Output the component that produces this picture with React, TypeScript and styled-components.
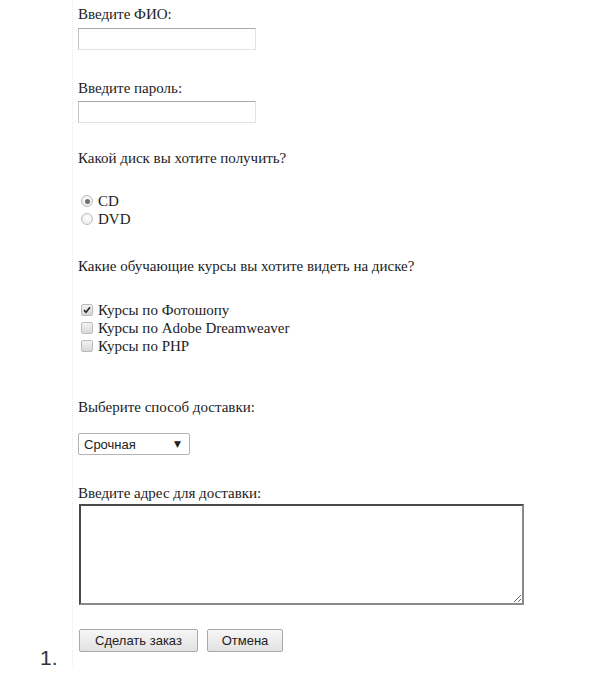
import React from "react";
import styled, { createGlobalStyle } from "styled-components";

const GlobalStyle = createGlobalStyle`
  html, body {
    margin: 0;
    padding: 0;
    background: #ffffff;
  }
`;

const Page = styled.div`
  display: flex;
  align-items: flex-end;
  padding-left: 40px;
`;

const Marker = styled.div`
  width: 32px;
  font-family: "Liberation Sans", Arial, sans-serif;
  font-size: 21px;
  line-height: 24px;
  color: #333333;
  margin-bottom: -2px;
`;

const Form = styled.form`
  display: flex;
  flex-direction: column;
  align-items: flex-start;
  border-left: 1px dotted #ececec;
  padding: 5px 0 16px 5px;
  font-family: "Liberation Serif", "Times New Roman", "DejaVu Serif", serif;
  font-size: 15px;
  line-height: 18px;
  color: #1c1c1c;
`;

const Section = styled.div<{ $top?: number }>`
  display: flex;
  flex-direction: column;
  align-items: flex-start;
  margin-top: ${(p) => p.$top ?? 0}px;
`;

const Label = styled.div<{ $gap?: number }>`
  margin-bottom: ${(p) => p.$gap ?? 0}px;
`;

const TextInput = styled.input`
  box-sizing: border-box;
  width: 178px;
  height: 22px;
  margin: 0;
  border: 1px solid #e2e2e2;
  border-top-color: #a8a8a8;
  border-left-color: #c4c4c4;
  background: #ffffff;
  outline: none;
`;

const Option = styled.label`
  display: flex;
  align-items: center;
  height: 18px;
  gap: 5px;
  padding-left: 3px;
`;

const Radio = styled.input.attrs({ type: "radio" })`
  appearance: none;
  box-sizing: border-box;
  width: 12px;
  height: 12px;
  margin: 0;
  border-radius: 50%;
  border: 1px solid #bdbdbd;
  background: radial-gradient(circle at 50% 40%, #ffffff 0%, #e6e6e6 100%);
  display: grid;
  place-items: center;

  &:checked::after {
    content: "";
    width: 5px;
    height: 5px;
    border-radius: 50%;
    background: #707070;
  }
`;

const Check = styled.input.attrs({ type: "checkbox" })`
  appearance: none;
  box-sizing: border-box;
  width: 12px;
  height: 12px;
  margin: 0;
  border-radius: 2px;
  border: 1px solid #bcbcbc;
  background: linear-gradient(#f2f2f2, #d8d8d8);
`;

const CheckWrap = styled.span`
  position: relative;
  display: inline-flex;
`;

const CheckMark = styled.svg`
  position: absolute;
  left: 1px;
  top: 1px;
  width: 10px;
  height: 10px;
  pointer-events: none;
`;

const SelectWrap = styled.div`
  position: relative;
  display: inline-flex;
`;

const Select = styled.select`
  appearance: none;
  box-sizing: border-box;
  width: 112px;
  height: 22px;
  margin: 0;
  padding: 0 0 0 5px;
  border: 1px solid #b4b4b4;
  border-radius: 2px;
  background: #ffffff;
  font-family: "Liberation Sans", Arial, sans-serif;
  font-size: 13px;
  color: #222222;
  outline: none;
`;

const Arrow = styled.span`
  position: absolute;
  right: 9px;
  top: 4px;
  font-size: 9px;
  line-height: 14px;
  color: #222222;
  pointer-events: none;
  font-family: "DejaVu Sans", sans-serif;
`;

const TextArea = styled.textarea`
  box-sizing: border-box;
  width: 445px;
  height: 101px;
  margin: 0 0 0 1px;
  border: 2px solid #4a4a4a;
  border-right-color: #8a8a8a;
  border-bottom-color: #8a8a8a;
  background: #ffffff;
  outline: none;
  resize: both;
`;

const Buttons = styled.div`
  display: flex;
  gap: 9px;
  padding-left: 1px;
`;

const Button = styled.button<{ $w: number }>`
  box-sizing: border-box;
  width: ${(p) => p.$w}px;
  height: 23px;
  margin: 0;
  padding: 0;
  border: 1px solid #a9a9a9;
  border-radius: 2px;
  background: linear-gradient(#f6f6f6, #e2e2e2);
  font-family: "Liberation Sans", Arial, sans-serif;
  font-size: 13px;
  color: #222222;
`;

export default function App() {
  return (
    <>
      <GlobalStyle />
      <Page>
        <Marker>1.</Marker>
        <Form onSubmit={(e) => e.preventDefault()}>
          <Section>
            <Label $gap={5}>Введите ФИО:</Label>
            <TextInput type="text" />
          </Section>
          <Section $top={29}>
            <Label $gap={4}>Введите пароль:</Label>
            <TextInput type="password" />
          </Section>
          <Section $top={26}>
            <Label $gap={25}>Какой диск вы хотите получить?</Label>
            <Option>
              <Radio name="disk" defaultChecked />
              CD
            </Option>
            <Option>
              <Radio name="disk" />
              DVD
            </Option>
          </Section>
          <Section $top={29}>
            <Label $gap={26}>Какие обучающие курсы вы хотите видеть на диске?</Label>
            <Option>
              <CheckWrap>
                <Check defaultChecked />
                <CheckMark viewBox="0 0 10 10">
                  <path d="M2 5.2 L4 7.3 L8 2.3" fill="none" stroke="#2a2a2a" strokeWidth="1.7" />
                </CheckMark>
              </CheckWrap>
              Курсы по Фотошопу
            </Option>
            <Option>
              <Check />
              Курсы по Adobe Dreamweaver
            </Option>
            <Option>
              <Check />
              Курсы по PHP
            </Option>
          </Section>
          <Section $top={43}>
            <Label $gap={17}>Выберите способ доставки:</Label>
            <SelectWrap>
              <Select defaultValue="fast">
                <option value="fast">Срочная</option>
                <option value="normal">Обычная</option>
              </Select>
              <Arrow>▼</Arrow>
            </SelectWrap>
          </Section>
          <Section $top={29}>
            <Label $gap={2}>Введите адрес для доставки:</Label>
            <TextArea />
          </Section>
          <Section $top={24}>
            <Buttons>
              <Button type="submit" $w={119}>Сделать заказ</Button>
              <Button type="reset" $w={76}>Отмена</Button>
            </Buttons>
          </Section>
        </Form>
      </Page>
    </>
  );
}
